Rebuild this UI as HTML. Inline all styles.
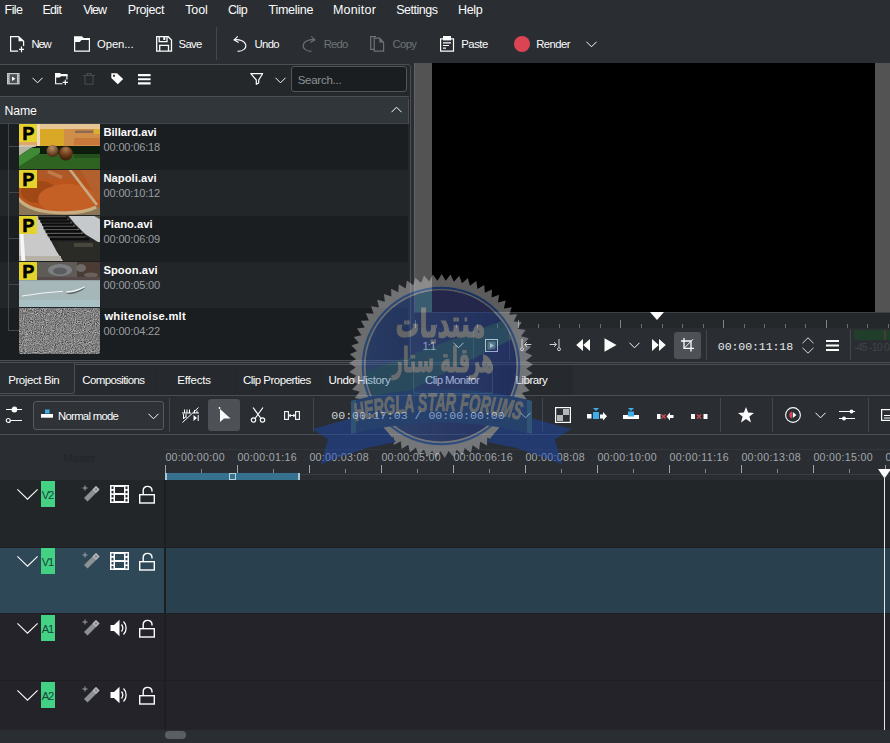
<!DOCTYPE html>
<html><head><meta charset="utf-8"><title>Kdenlive</title>
<style>
*{box-sizing:border-box;margin:0;padding:0}
html,body{width:890px;height:743px;overflow:hidden;background:#2a2e32}
body{position:relative;font-family:"Liberation Sans","DejaVu Sans",sans-serif;font-size:12px;color:#fcfcfc}
.a{position:absolute}
.t{position:absolute;white-space:nowrap;line-height:16px}
.mono{font-family:"Liberation Mono","DejaVu Sans Mono",monospace}
svg{position:absolute;overflow:visible}
.ln{position:absolute}
</style></head><body>
<div id="menubar"><span class="t" style="left:4.60px;top:1.67px;font-size:12.5px;letter-spacing:-0.597px;">File</span><span class="t" style="left:42.50px;top:1.67px;font-size:12.5px;letter-spacing:-0.722px;">Edit</span><span class="t" style="left:83.20px;top:1.67px;font-size:12.5px;letter-spacing:-0.980px;">View</span><span class="t" style="left:127.70px;top:1.67px;font-size:12.5px;letter-spacing:-0.372px;">Project</span><span class="t" style="left:185.20px;top:1.67px;font-size:12.5px;letter-spacing:-0.118px;">Tool</span><span class="t" style="left:227.90px;top:1.67px;font-size:12.5px;letter-spacing:-0.594px;">Clip</span><span class="t" style="left:268.60px;top:1.67px;font-size:12.5px;letter-spacing:-0.288px;">Timeline</span><span class="t" style="left:332.90px;top:1.67px;font-size:12.5px;letter-spacing:0.214px;">Monitor</span><span class="t" style="left:396.20px;top:1.67px;font-size:12.5px;letter-spacing:-0.488px;">Settings</span><span class="t" style="left:458.00px;top:1.67px;font-size:12.5px;letter-spacing:-0.352px;">Help</span></div><div id="toolbar"><svg style="left:10px;top:36px" width="16" height="16" viewBox="0 0 16 16" fill="none" stroke="#fcfcfc" stroke-width="1.2" ><path d="M8.2,15.2H0.6V0.6H8.6L13.6,5.2V10"/><path d="M8.5,0.3L14,5.3H8.5Z" fill="#fcfcfc" stroke="none"/><path d="M11.5,10.6V16.2M9,13.4H14"/></svg><span class="t" style="left:31.60px;top:36.08px;font-size:11.3px;letter-spacing:-1.321px;">New</span><svg style="left:74px;top:36px" width="16" height="16" viewBox="0 0 16 16" fill="none" stroke="#fcfcfc" stroke-width="1.2" ><path d="M0.6,2.5H15.4V15.2H0.6Z"/><path d="M0,0.3H8L10,2.4H16V4H7.6L5.6,6H0Z" fill="#fcfcfc" stroke="none"/></svg><span class="t" style="left:97.00px;top:36.08px;font-size:11.3px;letter-spacing:-0.085px;">Open...</span><svg style="left:156px;top:36px" width="16" height="16" viewBox="0 0 16 16" fill="none" stroke="#fcfcfc" stroke-width="1.3" ><path d="M0.7,0.7H12.2L15.5,4V15.1H0.7Z"/><path d="M3.2,0.7V5.6H11V0.7"/><path d="M8.3,1V4" stroke-width="2"/><path d="M3.7,15.1V9.3H12.5V15.1"/></svg><span class="t" style="left:178.60px;top:36.08px;font-size:11.3px;letter-spacing:-0.689px;">Save</span><div class="ln" style="left:216px;top:27px;width:1px;height:33px;background:#43484d"></div><svg style="left:233px;top:36px" width="14" height="16" viewBox="0 0 14 16" fill="none" stroke="#fcfcfc" stroke-width="1.1" ><path d="M4.8,0.3L1.1,3.8L5.6,6.4"/><path d="M1.1,3.8C6,3.2 11.5,4.5 12.7,8.6C13.6,12.4 10,15.3 4.6,15.4"/></svg><span class="t" style="left:254.60px;top:36.08px;font-size:11.3px;letter-spacing:-0.675px;">Undo</span><svg style="left:302px;top:36px" width="14" height="16" viewBox="0 0 14 16" fill="none" stroke="#6e7276" stroke-width="1.1" ><path d="M9.2,0.3L12.9,3.8L8.4,6.4"/><path d="M12.9,3.8C8,3.2 2.5,4.5 1.3,8.6C0.4,12.4 4,15.3 9.4,15.4"/></svg><span class="t" style="left:323.80px;top:36.08px;font-size:11.3px;letter-spacing:-0.841px;color:#6e7276">Redo</span><svg style="left:370px;top:36px" width="15" height="16" viewBox="0 0 15 16" fill="none" stroke="#6e7276" stroke-width="1.2" ><path d="M4,13.4H0.7V0.7H6"/><path d="M4.2,2.2H9.6L13.6,6.4V15.2H4.2Z"/><path d="M9.4,1.8L14,6.6H9.4Z" fill="#6e7276" stroke="none"/></svg><span class="t" style="left:392.60px;top:36.08px;font-size:11.3px;letter-spacing:-0.675px;color:#6e7276">Copy</span><svg style="left:440px;top:36px" width="14" height="16" viewBox="0 0 14 16" fill="none" stroke="#fcfcfc" stroke-width="1.2" ><path d="M0.6,2.8H13.5V15.2H0.6Z"/><path d="M3,0H11V4.4H3Z" fill="#fcfcfc" stroke="none"/><path d="M3,6.8H11M3,9.5H9M3,12.2H6"/></svg><span class="t" style="left:461.30px;top:36.08px;font-size:11.3px;letter-spacing:-0.476px;">Paste</span><div class="a" style="left:514px;top:36px;width:16px;height:16px;border-radius:50%;background:#da4453"></div><span class="t" style="left:536.20px;top:36.08px;font-size:11.3px;letter-spacing:-0.538px;">Render</span><svg style="left:586px;top:41px" width="11" height="7" viewBox="0 0 11 7" fill="none" stroke="#fcfcfc" stroke-width="1" ><path d="M0.5,0.8L5.5,5.8L10.5,0.8"/></svg></div><div id="bin"><div class="a" style="left:-2px;top:64px;width:413px;height:297px;border:1px solid #4a4f54;border-radius:0 3px 3px 0;background:#25282b"></div><div class="ln" style="left:0px;top:96px;width:409px;height:1px;background:#4a4f54"></div><svg style="left:7px;top:73.3px" width="12.6" height="11.4" viewBox="0 0 12.6 11.4" fill="none" stroke="#fcfcfc" stroke-width="1" ><rect x="0" y="0" width="12.6" height="11.4" fill="#c9cbcc" stroke="none"/><rect x="2.6" y="1.2" width="7.4" height="9" fill="#4b4f53" stroke="none"/><path d="M5,3.4L8.4,5.7L5,8Z" fill="#fcfcfc" stroke="none"/><path d="M1.3,1V10.4M11.3,1V10.4" stroke="#8f9396" stroke-width="1" stroke-dasharray="1.4 1.2"/></svg><svg style="left:32px;top:76.5px" width="11" height="7" viewBox="0 0 11 7" fill="none" stroke="#fcfcfc" stroke-width="1" ><path d="M0.5,0.8L5.5,5.8L10.5,0.8"/></svg><svg style="left:55px;top:73.3px" width="13" height="12" viewBox="0 0 13 12" fill="none" stroke="#fcfcfc" stroke-width="1.1" ><path d="M7.5,10.8H0.6V1.5H11.9V6.5"/><path d="M0,0H5L6.5,1.5H12.5V3.2H6L4.6,4.6H0Z" fill="#fcfcfc" stroke="none"/><path d="M10.3,6.8V12M7.7,9.4H12.9"/></svg><svg style="left:83px;top:73px" width="12" height="12" viewBox="0 0 12 12" fill="none" stroke="#4b4f54" stroke-width="1" ><path d="M0,2.5H12M4,2.5V0.5H8V2.5M2,2.5V11.2H10V2.5"/></svg><svg style="left:110.6px;top:73.3px" width="12.4" height="11.4" viewBox="0 0 12.4 11.4" fill="none" stroke="#fcfcfc" stroke-width="1" ><path d="M0.3,0.3H6L12.2,6L6.8,11.2L0.3,5Z" fill="#fcfcfc" stroke="none"/><circle cx="3" cy="2.8" r="1.1" fill="#25282b" stroke="none"/></svg><svg style="left:138.4px;top:73.9px" width="12.6" height="11" viewBox="0 0 12.6 11" fill="none" stroke="#fcfcfc" stroke-width="1" ><path d="M0,1.1H12.6M0,5.3H12.6M0,9.4H12.6" stroke-width="2.1"/></svg><svg style="left:249.5px;top:73px" width="14" height="12" viewBox="0 0 14 12" fill="none" stroke="#fcfcfc" stroke-width="1.2" ><path d="M0.8,0.7H12.6L8.7,7V10L6.3,11.3V7Z" stroke-linejoin="round"/></svg><svg style="left:274.5px;top:76.6px" width="11" height="7" viewBox="0 0 11 7" fill="none" stroke="#fcfcfc" stroke-width="1" ><path d="M0.5,0.8L5.5,5.8L10.5,0.8"/></svg><div class="a" style="left:291px;top:66px;width:116px;height:26px;border:1px solid #50555a;border-radius:3px;background:#1b1e20"></div><span class="t" style="left:297.70px;top:71.82px;font-size:11.5px;letter-spacing:-0.266px;color:#8d9195">Search...</span><div class="a" style="left:0px;top:97px;width:409px;height:27px;background:#31363b;border-right:1px solid #4a4f54;border-bottom:1px solid #43484d;border-top-right-radius:3px"></div><span class="t" style="left:4.60px;top:102.74px;font-size:12.3px;letter-spacing:-0.188px;">Name</span><svg style="left:391px;top:106px" width="11" height="7" viewBox="0 0 11 7" fill="none" stroke="#fcfcfc" stroke-width="1" ><path d="M0.5,6.2L5.5,1.2L10.5,6.2"/></svg><div class="a" style="left:0px;top:124px;width:408px;height:236px;background:#1b1e20"></div><div class="a" style="left:0px;top:170px;width:408px;height:46px;background:#232629"></div><div class="a" style="left:0px;top:262px;width:408px;height:46px;background:#232629"></div><div class="ln" style="left:8px;top:124px;width:1px;height:207px;background:#43474b"></div><div class="ln" style="left:9px;top:146px;width:10px;height:1px;background:#43474b"></div><div class="ln" style="left:9px;top:192px;width:10px;height:1px;background:#43474b"></div><div class="ln" style="left:9px;top:238px;width:10px;height:1px;background:#43474b"></div><div class="ln" style="left:9px;top:284px;width:10px;height:1px;background:#43474b"></div><div class="ln" style="left:9px;top:330px;width:10px;height:1px;background:#43474b"></div><svg width="0" height="0" style="left:0;top:0"><defs><filter id="tb" x="-5%" y="-5%" width="110%" height="110%"><feGaussianBlur stdDeviation="0.55"/></filter><radialGradient id="b1" cx="0.45" cy="0.25" r="0.8"><stop offset="0" stop-color="#b89068"/><stop offset="0.55" stop-color="#7a5030"/><stop offset="1" stop-color="#3a2010"/></radialGradient><radialGradient id="b2" cx="0.5" cy="0.2" r="0.85"><stop offset="0" stop-color="#a87850"/><stop offset="0.5" stop-color="#6e3c1a"/><stop offset="1" stop-color="#2e1608"/></radialGradient></defs></svg><svg style="left:19px;top:124px;overflow:hidden" width="81" height="45" viewBox="0 0 81 45"><g filter="url(#tb)"><rect x="-3" y="-3" width="87" height="51" fill="#d29a38"/><rect x="21" y="4" width="25" height="18" fill="#d8a828"/><rect x="45" y="5" width="39" height="17" fill="#cf8f4a"/><rect x="55" y="14" width="29" height="7" fill="#c8783a"/><rect x="-3" y="-3" width="87" height="8" fill="#e6c594"/><rect x="18" y="-3" width="3" height="25" fill="#efd9c0"/><rect x="56" y="6.5" width="18" height="2.5" fill="#8f6a50"/><rect x="75" y="5" width="6" height="5" fill="#d8b030"/><rect x="-3" y="18" width="21" height="4" fill="#dfa868"/><rect x="-3" y="22" width="87" height="9" fill="#0f1b09"/><rect x="-3" y="30" width="87" height="18" fill="#2d6420"/><rect x="55" y="30" width="29" height="4" fill="#24501a"/><path d="M-3,22H17L12,24L-3,34Z" fill="#b4b4a4"/><path d="M-3,34L12,24H21V29L-3,44Z" fill="#3f8a34"/><path d="M-3,21.2H17V22.6H-3Z" fill="#d8d0c0"/><circle cx="33.5" cy="27" r="6" fill="url(#b1)"/><circle cx="46.8" cy="29.5" r="7" fill="url(#b2)"/></g></svg><div class="a" style="left:19px;top:124px;width:18px;height:18px;background:#e3d32c"></div><span class="t" style="left:22.40px;top:125.90px;font-size:17.6px;letter-spacing:0.000px;font-weight:bold;color:#000;-webkit-text-stroke:0.7px #000">P</span><span class="t" style="left:103.40px;top:123.62px;font-size:11.2px;letter-spacing:-0.017px;font-weight:bold;">Billard.avi</span><span class="t" style="left:103.60px;top:138.59px;font-size:11px;letter-spacing:-0.159px;color:#9a9ea2">00:00:06:18</span><svg style="left:19px;top:170px;overflow:hidden" width="81" height="45" viewBox="0 0 81 45"><g filter="url(#tb)"><rect x="-3" y="-3" width="87" height="51" fill="#b9551f"/><rect x="-3" y="-3" width="87" height="12" fill="#ad5828"/><ellipse cx="20" cy="22" rx="18" ry="11" fill="#a04812"/><ellipse cx="48" cy="29" rx="29" ry="15" fill="#c45f27"/><path d="M60,-3H84V30L78,30Z" fill="#b2602f"/><path d="M30,0L44,6L42,9L28,3Z" fill="#c07a48"/><path d="M-3,46V26C4,36 14,40 30,42C50,44 66,43 78,36L84,40V48Z" fill="#8a7656"/><path d="M-2,27C4,36 14,40 30,42C50,44 66,43 77,37" stroke="#c9ad80" stroke-width="3.2" fill="none"/><path d="M50.5,-1L78,35" stroke="#c8aa82" stroke-width="2.8" fill="none"/></g></svg><div class="a" style="left:19px;top:170px;width:18px;height:18px;background:#e3d32c"></div><span class="t" style="left:22.40px;top:171.90px;font-size:17.6px;letter-spacing:0.000px;font-weight:bold;color:#000;-webkit-text-stroke:0.7px #000">P</span><span class="t" style="left:103.40px;top:169.62px;font-size:11.2px;letter-spacing:0.051px;font-weight:bold;">Napoli.avi</span><span class="t" style="left:103.60px;top:184.59px;font-size:11px;letter-spacing:-0.159px;color:#9a9ea2">00:00:10:12</span><svg style="left:19px;top:216px;overflow:hidden" width="81" height="45" viewBox="0 0 81 45"><g filter="url(#tb)"><rect x="-3" y="-3" width="87" height="51" fill="#c9c9c9"/><path d="M17,-3H84V48H46L38,36Z" fill="#262626"/><path d="M47,-3H72L84,5V29L66,18L56,8Z" fill="#c6c9cc"/><path d="M70,-3H84V5Z" fill="#5a5648"/><g stroke="#6e6e6e" stroke-width="1.2"><path d="M19,1H47M21,4H50M22,7H53M24,10.2H56M25,13.7H60M27,17.2H64M29,21H66"/></g><g stroke="#0b0b0b" stroke-width="2.3"><path d="M19.5,2.5H48M21.5,5.5H51M23,8.6H54M24.5,12H58M26.5,15.5H62M28.5,19.2H66M31,23H70"/></g><path d="M36,26H84V48H46Z" fill="#2a2a28"/><path d="M55,27H74V31H55Z" fill="#4a463a"/><path d="M-3,40H42V48H-3Z" fill="#b6b2a8"/><path d="M1,18H4.5L6.5,48H2.5Z" fill="#f6f6f6"/></g></svg><div class="a" style="left:19px;top:216px;width:18px;height:18px;background:#e3d32c"></div><span class="t" style="left:22.40px;top:217.90px;font-size:17.6px;letter-spacing:0.000px;font-weight:bold;color:#000;-webkit-text-stroke:0.7px #000">P</span><span class="t" style="left:103.40px;top:215.62px;font-size:11.2px;letter-spacing:-0.001px;font-weight:bold;">Piano.avi</span><span class="t" style="left:103.60px;top:230.59px;font-size:11px;letter-spacing:-0.159px;color:#9a9ea2">00:00:06:09</span><svg style="left:19px;top:262px;overflow:hidden" width="81" height="45" viewBox="0 0 81 45"><g filter="url(#tb)"><rect x="-3" y="-3" width="87" height="51" fill="#a5b7b9"/><rect x="-3" y="-3" width="87" height="21" fill="#5f5b59"/><ellipse cx="41" cy="8" rx="12" ry="6" fill="#7c7e82"/><ellipse cx="41" cy="9" rx="7" ry="3.5" fill="#5a5c60"/><path d="M58,-3H84V18H58Z" fill="#4b3a34"/><ellipse cx="62" cy="6" rx="5" ry="4" fill="#6e6866"/><ellipse cx="72" cy="13" rx="7" ry="2.5" fill="#6a605c"/><rect x="-3" y="15" width="87" height="3.2" fill="#574a48"/><rect x="-3" y="38" width="87" height="10" fill="#a9c0c4"/><path d="M3,34L24,31L44,29.2" stroke="#eef2f2" stroke-width="1.1" fill="none"/><path d="M47,30.6C52,32.5 60,30.5 66,25.2" stroke="#5e6a6c" stroke-width="1.6" fill="none"/><path d="M47,30C53,30 60,28 66,24.8" stroke="#f4f6f6" stroke-width="1.3" fill="none"/></g></svg><div class="a" style="left:19px;top:262px;width:18px;height:18px;background:#e3d32c"></div><span class="t" style="left:22.40px;top:263.90px;font-size:17.6px;letter-spacing:0.000px;font-weight:bold;color:#000;-webkit-text-stroke:0.7px #000">P</span><span class="t" style="left:103.40px;top:261.62px;font-size:11.2px;letter-spacing:0.094px;font-weight:bold;">Spoon.avi</span><span class="t" style="left:103.60px;top:276.59px;font-size:11px;letter-spacing:-0.159px;color:#9a9ea2">00:00:05:00</span><svg style="left:19px;top:308px;overflow:hidden;border-radius:0 0 3px 3px" width="81" height="46" viewBox="0 0 81 46"><filter id="nz" x="0" y="0" width="100%" height="100%" color-interpolation-filters="sRGB"><feTurbulence type="fractalNoise" baseFrequency="0.9" numOctaves="2" seed="3"/><feColorMatrix type="matrix" values="0.42 0.42 0.42 0 -0.13  0.42 0.42 0.42 0 -0.13  0.42 0.42 0.42 0 -0.13  0 0 0 0 1"/></filter><rect width="81" height="46" fill="#8c8c8c"/><rect width="81" height="46" filter="url(#nz)"/></svg><span class="t" style="left:104.40px;top:307.62px;font-size:11.2px;letter-spacing:0.279px;font-weight:bold;">whitenoise.mlt</span><span class="t" style="left:103.60px;top:322.59px;font-size:11px;letter-spacing:-0.159px;color:#9a9ea2">00:00:04:22</span></div><div id="monitor"><div class="a" style="left:414px;top:63px;width:476px;height:249px;background:#535353;border-left:1px solid #5e6266"></div><div class="a" style="left:432px;top:63px;width:443px;height:249px;background:#000"></div><div class="a" style="left:415px;top:313px;width:475px;height:15px;background:#25282b"></div><div class="ln" style="left:414px;top:312px;width:476px;height:1px;background:#3d4247"></div><div class="ln" style="left:415px;top:320px;width:1px;height:8px;background:#7e8387"></div><div class="ln" style="left:436px;top:324px;width:1px;height:4px;background:#6a6f73"></div><div class="ln" style="left:456px;top:324px;width:1px;height:4px;background:#6a6f73"></div><div class="ln" style="left:477px;top:324px;width:1px;height:4px;background:#6a6f73"></div><div class="ln" style="left:497px;top:324px;width:1px;height:4px;background:#6a6f73"></div><div class="ln" style="left:518px;top:320px;width:1px;height:8px;background:#7e8387"></div><div class="ln" style="left:538px;top:324px;width:1px;height:4px;background:#6a6f73"></div><div class="ln" style="left:559px;top:324px;width:1px;height:4px;background:#6a6f73"></div><div class="ln" style="left:579px;top:324px;width:1px;height:4px;background:#6a6f73"></div><div class="ln" style="left:600px;top:324px;width:1px;height:4px;background:#6a6f73"></div><div class="ln" style="left:620px;top:320px;width:1px;height:8px;background:#7e8387"></div><div class="ln" style="left:641px;top:324px;width:1px;height:4px;background:#6a6f73"></div><div class="ln" style="left:662px;top:324px;width:1px;height:4px;background:#6a6f73"></div><div class="ln" style="left:682px;top:324px;width:1px;height:4px;background:#6a6f73"></div><div class="ln" style="left:703px;top:324px;width:1px;height:4px;background:#6a6f73"></div><div class="ln" style="left:723px;top:320px;width:1px;height:8px;background:#7e8387"></div><div class="ln" style="left:744px;top:324px;width:1px;height:4px;background:#6a6f73"></div><div class="ln" style="left:764px;top:324px;width:1px;height:4px;background:#6a6f73"></div><div class="ln" style="left:785px;top:324px;width:1px;height:4px;background:#6a6f73"></div><div class="ln" style="left:805px;top:324px;width:1px;height:4px;background:#6a6f73"></div><div class="ln" style="left:826px;top:320px;width:1px;height:8px;background:#7e8387"></div><div class="ln" style="left:847px;top:324px;width:1px;height:4px;background:#6a6f73"></div><div class="ln" style="left:867px;top:324px;width:1px;height:4px;background:#6a6f73"></div><div class="ln" style="left:888px;top:324px;width:1px;height:4px;background:#6a6f73"></div><svg style="left:650px;top:312px" width="14" height="8" viewBox="0 0 14 8"><path d="M0,0H14L7,8Z" fill="#fcfcfc"/></svg><span class="t" style="left:422.50px;top:338.08px;font-size:11.3px;letter-spacing:-0.961px;color:#d5d8da">1:1</span><svg style="left:453px;top:342px" width="11" height="7" viewBox="0 0 11 7" fill="none" stroke="#fcfcfc" stroke-width="1" ><path d="M0.5,0.8L5.5,5.8L10.5,0.8"/></svg><div class="ln" style="left:473px;top:331px;width:1px;height:29px;background:#43484d"></div><svg style="left:485px;top:339px" width="13" height="13" viewBox="0 0 13 13" fill="none" stroke="#fcfcfc" stroke-width="1" ><rect x="0.5" y="0.5" width="12" height="12" /><rect x="2.5" y="2.5" width="8" height="8" fill="#fcfcfc" fill-opacity="0.35" stroke="none"/><path d="M5,4L9,6.5L5,9Z" fill="#fcfcfc" stroke="none"/></svg><div class="ln" style="left:509px;top:331px;width:1px;height:29px;background:#43484d"></div><svg style="left:520px;top:339px" width="12" height="13" viewBox="0 0 12 13" fill="none" stroke="#d0d3d5" stroke-width="1" ><path d="M2,0V8.4"/><circle cx="2" cy="10.2" r="1.5"/><path d="M11.3,5.5H4.6M7,3.2L4.6,5.5L7,7.8"/></svg><svg style="left:548.7px;top:339px" width="12" height="13" viewBox="0 0 12 13" fill="none" stroke="#d0d3d5" stroke-width="1" ><path d="M10,0V8.4"/><circle cx="10" cy="10.2" r="1.5"/><path d="M0.7,5.5H7.4M5,3.2L7.4,5.5L5,7.8"/></svg><svg style="left:576px;top:339px" width="14" height="12" viewBox="0 0 14 12" fill="none" stroke="#fcfcfc" stroke-width="1" ><path d="M7,0V12L0.2,6ZM14,0V12L7.2,6Z" fill="#fcfcfc" stroke="none"/></svg><svg style="left:604px;top:338px" width="13" height="14" viewBox="0 0 13 14" fill="none" stroke="#fcfcfc" stroke-width="1" ><path d="M0.5,0.3V13.7L12.5,7Z" fill="#fcfcfc" stroke="none"/></svg><svg style="left:629px;top:342px" width="11" height="7" viewBox="0 0 11 7" fill="none" stroke="#fcfcfc" stroke-width="1" ><path d="M0.5,0.8L5.5,5.8L10.5,0.8"/></svg><svg style="left:651.6px;top:339px" width="14" height="12" viewBox="0 0 14 12" fill="none" stroke="#fcfcfc" stroke-width="1" ><path d="M0,0V12L6.8,6ZM7,0V12L13.8,6Z" fill="#fcfcfc" stroke="none"/></svg><div class="a" style="left:674px;top:332px;width:27px;height:27px;background:#4e5256;border-radius:3px"></div><svg style="left:680.7px;top:338px" width="13" height="13.5" viewBox="0 0 13 13.5" fill="none" stroke="#fcfcfc" stroke-width="1.3" ><path d="M3,0V10.4H13M0,3H10V13.5"/><path d="M3.4,10L12,1.2" stroke-width="1"/></svg><div class="ln" style="left:706px;top:330px;width:1px;height:30px;background:#43484d"></div><span class="t mono" style="left:717.80px;top:338.61px;font-size:11.6px;letter-spacing:-0.117px;color:#e6e8ea">00:00:11:18</span><svg style="left:802px;top:337px" width="12" height="17" viewBox="0 0 12 17" fill="none" stroke="#d8dadc" stroke-width="1" ><path d="M0.5,6.2L6,0.8L11.5,6.2M0.5,10.8L6,16.2L11.5,10.8"/></svg><svg style="left:826px;top:340px" width="13" height="11" viewBox="0 0 13 11" fill="none" stroke="#fcfcfc" stroke-width="1" ><path d="M0,1H13M0,5.5H13M0,10H13" stroke-width="2"/></svg><div class="ln" style="left:850px;top:330px;width:1px;height:30px;background:#43484d"></div><div class="a" style="left:854px;top:330px;width:36px;height:10px;background:#1f3f2a"></div><div class="ln" style="left:857px;top:330px;width:1px;height:10px;background:#2a3a30"></div><div class="ln" style="left:884px;top:330px;width:2px;height:10px;background:#4a3a36"></div><span class="t" style="left:854.00px;top:339.36px;font-size:10.5px;letter-spacing:-0.773px;color:#3f4549">-45 -10 0</span><div class="ln" style="left:0px;top:362px;width:890px;height:1px;background:#4a4f54"></div><div class="ln" style="left:413px;top:364px;width:477px;height:1px;background:#4a4f54"></div></div><div id="tabs"><div class="a" style="left:75px;top:364px;width:338px;height:31px;background:#26292d"></div><div class="ln" style="left:75px;top:364px;width:338px;height:1px;background:#4a4f54"></div><div class="a" style="left:493px;top:365px;width:80px;height:30px;background:#26292d"></div><div class="a" style="left:-2px;top:362px;width:77px;height:32px;border:1px solid #4a4f54;border-left:0;border-bottom-right-radius:3px;background:#2a2e32"></div><div class="ln" style="left:155px;top:365px;width:1px;height:29px;background:#23272a"></div><div class="ln" style="left:235px;top:365px;width:1px;height:29px;background:#23272a"></div><div class="ln" style="left:321px;top:365px;width:1px;height:29px;background:#23272a"></div><div class="a" style="left:413px;top:365px;width:80px;height:29px;border:1px solid #4a4f54;border-top:0;border-radius:0 0 3px 3px;background:#2a2e32"></div><span class="t" style="left:8.20px;top:371.92px;font-size:11.5px;letter-spacing:-0.411px;">Project Bin</span><span class="t" style="left:82.30px;top:371.92px;font-size:11.5px;letter-spacing:-0.629px;">Compositions</span><span class="t" style="left:177.20px;top:371.92px;font-size:11.5px;letter-spacing:-0.182px;">Effects</span><span class="t" style="left:242.90px;top:371.92px;font-size:11.5px;letter-spacing:-0.505px;">Clip Properties</span><span class="t" style="left:328.50px;top:371.92px;font-size:11.5px;letter-spacing:-0.383px;">Undo History</span><span class="t" style="left:425.00px;top:371.92px;font-size:11.5px;letter-spacing:-0.593px;">Clip Monitor</span><span class="t" style="left:515.50px;top:371.92px;font-size:11.5px;letter-spacing:-0.484px;">Library</span><div class="ln" style="left:0px;top:395px;width:890px;height:1px;background:#4a4f54"></div></div><div id="tltoolbar"><svg style="left:6px;top:406px" width="17" height="18" viewBox="0 0 17 18" fill="none" stroke="#fcfcfc" stroke-width="1.2" ><path d="M0,3.5H16M0,14.5H16" /><circle cx="8.4" cy="3.5" r="2.3" fill="#fcfcfc"/><circle cx="2.3" cy="14.5" r="2" fill="#2a2e32"/></svg><div class="a" style="left:33px;top:401px;width:131px;height:29px;border:1px solid #565b60;border-radius:3px;background:#2f3338"></div><svg style="left:41px;top:408px" width="12" height="11" viewBox="0 0 12 11"><rect x="4" y="1.5" width="4.5" height="4" fill="#3daee9"/><rect x="0" y="6" width="12" height="3.7" fill="#fcfcfc"/></svg><span class="t" style="left:58.00px;top:408.28px;font-size:11.3px;letter-spacing:-0.692px;">Normal mode</span><svg style="left:148px;top:412.5px" width="11" height="7" viewBox="0 0 11 7" fill="none" stroke="#fcfcfc" stroke-width="1" ><path d="M0.5,0.8L5.5,5.8L10.5,0.8"/></svg><div class="ln" style="left:169px;top:398px;width:1px;height:34px;background:#43484d"></div><svg style="left:181.5px;top:407px" width="18" height="16" viewBox="0 0 18 16" fill="none" stroke="#fcfcfc" stroke-width="1" ><path d="M0.5,15.5L16.5,0.5"/><path d="M0,6H9M2.5,2.5V6M5,2.5V6M7.5,2.5V6M12.5,3V6M15,3.5V6M11,6H17"/><path d="M1.5,7V12L3.5,9.5M4,7V11"/><path d="M11.5,8L15,11L11.5,14Z" fill="#fcfcfc" stroke="none"/><path d="M16.2,8V14"/></svg><div class="a" style="left:208px;top:399px;width:32px;height:32px;background:#4d5155;border-radius:3px"></div><svg style="left:218px;top:406px" width="14" height="17" viewBox="0 0 14 17" fill="none" stroke="#fcfcfc" stroke-width="1" ><path d="M2,3V16L6,12.5H12.5Z" fill="#fcfcfc" stroke="none"/><circle cx="1.5" cy="2" r="0.9" fill="#fcfcfc" stroke="none"/></svg><svg style="left:250px;top:407px" width="16" height="16" viewBox="0 0 16 16" fill="none" stroke="#fcfcfc" stroke-width="1.2" ><path d="M3,0.5L11,11.5M13,0.5L5,11.5"/><circle cx="3.5" cy="13" r="2.2"/><circle cx="12.5" cy="13" r="2.2"/></svg><svg style="left:284px;top:411px" width="16" height="9" viewBox="0 0 16 9" fill="none" stroke="#fcfcfc" stroke-width="1.1" ><rect x="0.6" y="0.6" width="3.8" height="7.8"/><rect x="11.6" y="0.6" width="3.8" height="7.8"/><path d="M5.5,4.5H10.5M6.5,3L5.5,4.5L6.5,6M9.5,3L10.5,4.5L9.5,6"/></svg><div class="ln" style="left:313px;top:398px;width:1px;height:34px;background:#43484d"></div><span class="t mono" style="left:331.30px;top:408.11px;font-size:11.6px;letter-spacing:-0.020px;color:#d0d3d6">00:00:17:03 / 00:00:00:00</span><svg style="left:520px;top:412px" width="11" height="7" viewBox="0 0 11 7" fill="none" stroke="#d0d3d6" stroke-width="1" ><path d="M0.5,0.8L5.5,5.8L10.5,0.8"/></svg><div class="ln" style="left:542px;top:398px;width:1px;height:34px;background:#43484d"></div><svg style="left:555px;top:407px" width="16" height="16" viewBox="0 0 16 16" fill="none" stroke="#fcfcfc" stroke-width="1" ><rect x="0.6" y="0.6" width="14.8" height="14.8" stroke-width="1.2"/><rect x="8" y="2" width="6" height="6" fill="#b4b6b8" stroke="none"/><rect x="2" y="8" width="6" height="6" fill="#b4b6b8" stroke="none"/></svg><svg style="left:587px;top:408px" width="20" height="13" viewBox="0 0 20 13"><path d="M6,0H12L9,3Z" fill="#3daee9"/><rect x="6" y="4" width="6" height="7" fill="#3daee9"/><rect x="0" y="6" width="4.5" height="4.5" fill="#fcfcfc"/><path d="M13,6.5H16V4L20,8.3L16,12.6V10.5H13Z" fill="#fcfcfc"/></svg><svg style="left:623px;top:408px" width="16" height="12" viewBox="0 0 16 12"><path d="M5,0H11L8,3Z" fill="#3daee9"/><rect x="5" y="3.5" width="6" height="5" fill="#3daee9"/><rect x="0" y="7" width="16" height="4" fill="#fcfcfc"/><rect x="5" y="7" width="6" height="1.5" fill="#3daee9"/></svg><svg style="left:657px;top:412px" width="17" height="9" viewBox="0 0 17 9"><rect x="0" y="2" width="3.5" height="5" fill="#fcfcfc"/><path d="M4.5,2.5L8.5,6.5M8.5,2.5L4.5,6.5" stroke="#da4453" stroke-width="1.3"/><path d="M9.5,4.5L13,0.5V3H16.5V6H13V8.5Z" fill="#fcfcfc"/></svg><svg style="left:691px;top:412px" width="17" height="9" viewBox="0 0 17 9"><rect x="0" y="2" width="4" height="5" fill="#fcfcfc"/><path d="M6,2.5L10,6.5M10,2.5L6,6.5" stroke="#da4453" stroke-width="1.3"/><rect x="12.5" y="2" width="4" height="5" fill="#fcfcfc"/></svg><div class="ln" style="left:720px;top:398px;width:1px;height:34px;background:#43484d"></div><svg style="left:738px;top:407px" width="16" height="16" viewBox="0 0 16 16"><path d="M8,0L10.1,5.6L16,5.9L11.4,9.6L13,15.4L8,12.1L3,15.4L4.6,9.6L0,5.9L5.9,5.6Z" fill="#fcfcfc"/></svg><div class="ln" style="left:772px;top:398px;width:1px;height:34px;background:#43484d"></div><svg style="left:785px;top:407px" width="16" height="16" viewBox="0 0 16 16" fill="none" stroke="#fcfcfc" stroke-width="1.1" ><circle cx="8" cy="8" r="7.4"/><path d="M7,4.5A3.6,3.6 0 0 0 7,11.5Z" fill="#da4453" stroke="none"/><path d="M7.8,5L11.5,8L7.8,11Z" fill="#fcfcfc" stroke="none"/></svg><svg style="left:815px;top:412px" width="11" height="7" viewBox="0 0 11 7" fill="none" stroke="#fcfcfc" stroke-width="1" ><path d="M0.5,0.8L5.5,5.8L10.5,0.8"/></svg><svg style="left:839px;top:409px" width="16" height="12" viewBox="0 0 16 12" fill="none" stroke="#fcfcfc" stroke-width="1.1" ><path d="M0,2.5H16M0,9.5H16"/><circle cx="12.5" cy="2.5" r="1.4" fill="#fcfcfc"/><circle cx="5" cy="9.5" r="1.4" fill="#fcfcfc"/></svg><div class="ln" style="left:868px;top:398px;width:1px;height:34px;background:#43484d"></div><svg style="left:881px;top:409px" width="12" height="12" viewBox="0 0 12 12" fill="none" stroke="#fcfcfc" stroke-width="1" ><rect x="0.6" y="0.6" width="14" height="10.8" stroke-width="1.2"/><path d="M3,6.5H12M3,9H12"/></svg><div class="ln" style="left:0px;top:434px;width:890px;height:1px;background:#4a4f54"></div></div><div id="timeline"><div class="a" style="left:0px;top:435px;width:890px;height:45px;background:#2a2e32"></div><span class="t" style="left:63.80px;top:449.89px;font-size:11px;letter-spacing:-0.351px;color:#212428">Master</span><div class="ln" style="left:165px;top:449px;width:725px;height:1px;background:#33373b"></div><span class="t" style="left:165.40px;top:449.23px;font-size:10.6px;letter-spacing:0.333px;color:#a3a7ab">00:00:00:00</span><div class="ln" style="left:165px;top:465px;width:1px;height:8px;background:#a0a4a8"></div><div class="ln" style="left:201px;top:469px;width:1px;height:4px;background:#80858a"></div><span class="t" style="left:237.40px;top:449.23px;font-size:10.6px;letter-spacing:0.333px;color:#a3a7ab">00:00:01:16</span><div class="ln" style="left:237px;top:465px;width:1px;height:8px;background:#a0a4a8"></div><div class="ln" style="left:273px;top:469px;width:1px;height:4px;background:#80858a"></div><span class="t" style="left:309.40px;top:449.23px;font-size:10.6px;letter-spacing:0.333px;color:#a3a7ab">00:00:03:08</span><div class="ln" style="left:309px;top:465px;width:1px;height:8px;background:#a0a4a8"></div><div class="ln" style="left:345px;top:469px;width:1px;height:4px;background:#80858a"></div><span class="t" style="left:381.40px;top:449.23px;font-size:10.6px;letter-spacing:0.333px;color:#a3a7ab">00:00:05:00</span><div class="ln" style="left:381px;top:465px;width:1px;height:8px;background:#a0a4a8"></div><div class="ln" style="left:417px;top:469px;width:1px;height:4px;background:#80858a"></div><span class="t" style="left:453.40px;top:449.23px;font-size:10.6px;letter-spacing:0.333px;color:#a3a7ab">00:00:06:16</span><div class="ln" style="left:453px;top:465px;width:1px;height:8px;background:#a0a4a8"></div><div class="ln" style="left:489px;top:469px;width:1px;height:4px;background:#80858a"></div><span class="t" style="left:525.40px;top:449.23px;font-size:10.6px;letter-spacing:0.333px;color:#a3a7ab">00:00:08:08</span><div class="ln" style="left:525px;top:465px;width:1px;height:8px;background:#a0a4a8"></div><div class="ln" style="left:561px;top:469px;width:1px;height:4px;background:#80858a"></div><span class="t" style="left:597.40px;top:449.23px;font-size:10.6px;letter-spacing:0.333px;color:#a3a7ab">00:00:10:00</span><div class="ln" style="left:597px;top:465px;width:1px;height:8px;background:#a0a4a8"></div><div class="ln" style="left:633px;top:469px;width:1px;height:4px;background:#80858a"></div><span class="t" style="left:669.40px;top:449.23px;font-size:10.6px;letter-spacing:0.411px;color:#a3a7ab">00:00:11:16</span><div class="ln" style="left:669px;top:465px;width:1px;height:8px;background:#a0a4a8"></div><div class="ln" style="left:705px;top:469px;width:1px;height:4px;background:#80858a"></div><span class="t" style="left:741.40px;top:449.23px;font-size:10.6px;letter-spacing:0.333px;color:#a3a7ab">00:00:13:08</span><div class="ln" style="left:741px;top:465px;width:1px;height:8px;background:#a0a4a8"></div><div class="ln" style="left:777px;top:469px;width:1px;height:4px;background:#80858a"></div><span class="t" style="left:813.40px;top:449.23px;font-size:10.6px;letter-spacing:0.333px;color:#a3a7ab">00:00:15:00</span><div class="ln" style="left:813px;top:465px;width:1px;height:8px;background:#a0a4a8"></div><div class="ln" style="left:849px;top:469px;width:1px;height:4px;background:#80858a"></div><span class="t" style="left:885.40px;top:449.23px;font-size:10.6px;letter-spacing:0.333px;color:#a3a7ab">00:00:16:16</span><div class="ln" style="left:885px;top:465px;width:1px;height:8px;background:#a0a4a8"></div><div class="ln" style="left:921px;top:469px;width:1px;height:4px;background:#80858a"></div><div class="ln" style="left:165px;top:474px;width:725px;height:1px;background:#3a3e43"></div><div class="a" style="left:165px;top:473px;width:135px;height:7px;background:#36718f;border-left:2px solid #a9c9d2;border-right:2px solid #a9c9d2"></div><div class="a" style="left:229px;top:473px;width:7px;height:7px;border:1.5px solid #b5d3da;background:#36718f"></div><div class="a" style="left:0px;top:480px;width:890px;height:250px;background:#1d1f22"></div><div class="a" style="left:0px;top:480px;width:164px;height:67px;background:#232629"></div><div class="a" style="left:166px;top:480px;width:724px;height:67px;background:#232629"></div><svg style="left:16.5px;top:489px" width="21" height="11" viewBox="0 0 21 11" fill="none" stroke="#fcfcfc" stroke-width="1.1" ><path d="M0.4,0.4L10.5,10.2L20.6,0.4"/></svg><div class="a" style="left:41px;top:481px;width:14px;height:26px;background:#43d284"></div><span class="t" style="left:41.70px;top:486.58px;font-size:11.3px;letter-spacing:-1.335px;color:#17453a">V2</span><svg style="left:82px;top:485px" width="18" height="18" viewBox="0 0 18 18"><path d="M14,1L17.5,4.5L5.5,16.5L2,13Z" fill="#8d9194"/><path d="M14,1L17.5,4.5L14,8L10.5,4.5Z" fill="#b4b7ba"/><path d="M12.6,4.5L14,3.1L15.4,4.5L14,5.9Z" fill="#7d8184"/><path d="M3,0.5V5.5M0.5,3H5.5" stroke="#9da1a4" stroke-width="1"/></svg><svg style="left:110px;top:485px" width="19" height="18" viewBox="0 0 19 18"><rect width="19" height="18" fill="#fcfcfc"/><rect x="5" y="2" width="9" height="6" fill="#232629"/><rect x="5" y="10" width="9" height="6" fill="#232629"/><g fill="#232629"><rect x="1.5" y="1.5" width="2" height="2.5"/><rect x="1.5" y="5.8" width="2" height="2.5"/><rect x="1.5" y="10" width="2" height="2.5"/><rect x="1.5" y="14" width="2" height="2.5"/><rect x="15.5" y="1.5" width="2" height="2.5"/><rect x="15.5" y="5.8" width="2" height="2.5"/><rect x="15.5" y="10" width="2" height="2.5"/><rect x="15.5" y="14" width="2" height="2.5"/></g></svg><svg style="left:139px;top:485px" width="16" height="19" viewBox="0 0 16 19" fill="none" stroke="#fcfcfc" stroke-width="1.4" ><rect x="0.7" y="9.7" width="14.6" height="8.3"/><path d="M4.2,9.5V5.5C4.2,0 13,0 13,5.5V6.5"/></svg><div class="a" style="left:0px;top:548px;width:164px;height:65px;background:#2e4858"></div><div class="a" style="left:166px;top:548px;width:724px;height:65px;background:#29414f"></div><svg style="left:16.5px;top:556px" width="21" height="11" viewBox="0 0 21 11" fill="none" stroke="#fcfcfc" stroke-width="1.1" ><path d="M0.4,0.4L10.5,10.2L20.6,0.4"/></svg><div class="a" style="left:41px;top:548px;width:14px;height:26px;background:#43d284"></div><span class="t" style="left:41.70px;top:553.58px;font-size:11.3px;letter-spacing:-1.335px;color:#17453a">V1</span><svg style="left:82px;top:552px" width="18" height="18" viewBox="0 0 18 18"><path d="M14,1L17.5,4.5L5.5,16.5L2,13Z" fill="#8d9194"/><path d="M14,1L17.5,4.5L14,8L10.5,4.5Z" fill="#b4b7ba"/><path d="M12.6,4.5L14,3.1L15.4,4.5L14,5.9Z" fill="#7d8184"/><path d="M3,0.5V5.5M0.5,3H5.5" stroke="#9da1a4" stroke-width="1"/></svg><svg style="left:110px;top:552px" width="19" height="18" viewBox="0 0 19 18"><rect width="19" height="18" fill="#fcfcfc"/><rect x="5" y="2" width="9" height="6" fill="#2e4858"/><rect x="5" y="10" width="9" height="6" fill="#2e4858"/><g fill="#2e4858"><rect x="1.5" y="1.5" width="2" height="2.5"/><rect x="1.5" y="5.8" width="2" height="2.5"/><rect x="1.5" y="10" width="2" height="2.5"/><rect x="1.5" y="14" width="2" height="2.5"/><rect x="15.5" y="1.5" width="2" height="2.5"/><rect x="15.5" y="5.8" width="2" height="2.5"/><rect x="15.5" y="10" width="2" height="2.5"/><rect x="15.5" y="14" width="2" height="2.5"/></g></svg><svg style="left:139px;top:552px" width="16" height="19" viewBox="0 0 16 19" fill="none" stroke="#fcfcfc" stroke-width="1.4" ><rect x="0.7" y="9.7" width="14.6" height="8.3"/><path d="M4.2,9.5V5.5C4.2,0 13,0 13,5.5V6.5"/></svg><div class="a" style="left:0px;top:614px;width:164px;height:66px;background:#24232a"></div><div class="a" style="left:166px;top:614px;width:724px;height:66px;background:#24232a"></div><svg style="left:16.5px;top:623px" width="21" height="11" viewBox="0 0 21 11" fill="none" stroke="#fcfcfc" stroke-width="1.1" ><path d="M0.4,0.4L10.5,10.2L20.6,0.4"/></svg><div class="a" style="left:41px;top:615px;width:14px;height:26px;background:#43d284"></div><span class="t" style="left:41.70px;top:620.58px;font-size:11.3px;letter-spacing:-1.335px;color:#17453a">A1</span><svg style="left:82px;top:619px" width="18" height="18" viewBox="0 0 18 18"><path d="M14,1L17.5,4.5L5.5,16.5L2,13Z" fill="#8d9194"/><path d="M14,1L17.5,4.5L14,8L10.5,4.5Z" fill="#b4b7ba"/><path d="M12.6,4.5L14,3.1L15.4,4.5L14,5.9Z" fill="#7d8184"/><path d="M3,0.5V5.5M0.5,3H5.5" stroke="#9da1a4" stroke-width="1"/></svg><svg style="left:110px;top:619px" width="19" height="18" viewBox="0 0 19 18" fill="none" stroke="#fcfcfc" stroke-width="1.3" ><path d="M0.5,6H4L9.5,0.8V17.2L4,12H0.5Z" fill="#fcfcfc" stroke="none"/><path d="M11.5,5.5C13,7.5 13,10.5 11.5,12.5M13.5,2.5C17,6 17,12 13.5,15.5"/></svg><svg style="left:139px;top:619px" width="16" height="19" viewBox="0 0 16 19" fill="none" stroke="#fcfcfc" stroke-width="1.4" ><rect x="0.7" y="9.7" width="14.6" height="8.3"/><path d="M4.2,9.5V5.5C4.2,0 13,0 13,5.5V6.5"/></svg><div class="a" style="left:0px;top:681px;width:164px;height:49px;background:#24232a"></div><div class="a" style="left:166px;top:681px;width:724px;height:49px;background:#24232a"></div><svg style="left:16.5px;top:690px" width="21" height="11" viewBox="0 0 21 11" fill="none" stroke="#fcfcfc" stroke-width="1.1" ><path d="M0.4,0.4L10.5,10.2L20.6,0.4"/></svg><div class="a" style="left:41px;top:682px;width:14px;height:26px;background:#43d284"></div><span class="t" style="left:41.70px;top:687.58px;font-size:11.3px;letter-spacing:-1.335px;color:#17453a">A2</span><svg style="left:82px;top:686px" width="18" height="18" viewBox="0 0 18 18"><path d="M14,1L17.5,4.5L5.5,16.5L2,13Z" fill="#8d9194"/><path d="M14,1L17.5,4.5L14,8L10.5,4.5Z" fill="#b4b7ba"/><path d="M12.6,4.5L14,3.1L15.4,4.5L14,5.9Z" fill="#7d8184"/><path d="M3,0.5V5.5M0.5,3H5.5" stroke="#9da1a4" stroke-width="1"/></svg><svg style="left:110px;top:686px" width="19" height="18" viewBox="0 0 19 18" fill="none" stroke="#fcfcfc" stroke-width="1.3" ><path d="M0.5,6H4L9.5,0.8V17.2L4,12H0.5Z" fill="#fcfcfc" stroke="none"/><path d="M11.5,5.5C13,7.5 13,10.5 11.5,12.5M13.5,2.5C17,6 17,12 13.5,15.5"/></svg><svg style="left:139px;top:686px" width="16" height="19" viewBox="0 0 16 19" fill="none" stroke="#fcfcfc" stroke-width="1.4" ><rect x="0.7" y="9.7" width="14.6" height="8.3"/><path d="M4.2,9.5V5.5C4.2,0 13,0 13,5.5V6.5"/></svg><div class="ln" style="left:164px;top:480px;width:2px;height:250px;background:#1c1f21"></div><div class="a" style="left:0px;top:730px;width:890px;height:13px;background:#2a2e32"></div><div class="a" style="left:165px;top:731px;width:21px;height:8px;border-radius:4px;background:#5b5f63"></div><svg style="left:878px;top:469.4px" width="13" height="10" viewBox="0 0 13 10"><path d="M0,0H13L6.5,9.6Z" fill="#fcfcfc"/></svg><div class="ln" style="left:884px;top:476px;width:1px;height:254px;background:#e8e8e8"></div></div><svg id="wm" style="left:300px;top:265px;opacity:0.43" width="290" height="215" viewBox="300 265 290 215">
<defs><linearGradient id="wg" x1="0" y1="0" x2="1" y2="0"><stop offset="0" stop-color="#3a62b8"/><stop offset="0.5" stop-color="#2a4aa8"/><stop offset="1" stop-color="#1c379d"/></linearGradient><clipPath id="wc"><circle cx="441" cy="366" r="75.4"/></clipPath>
<path id="arc" d="M354,421.5 Q441,400 528,421.5"/></defs>
<polygon points="441.7,274.0 445.7,280.8 450.5,274.5 453.9,281.7 459.3,275.8 462.0,283.3 467.9,278.0 469.9,285.7 476.3,281.0 477.5,288.9 484.3,284.9 484.8,292.8 492.0,289.4 491.6,297.4 499.1,294.7 498.0,302.6 505.7,300.6 503.9,308.4 511.7,307.2 509.2,314.7 517.1,314.3 513.8,321.5 521.7,321.9 517.7,328.8 525.6,329.9 521.0,336.3 528.7,338.2 523.5,344.2 531.0,346.8 525.2,352.2 532.4,355.6 526.1,360.4 533.0,364.4 526.3,368.7 532.7,373.3 525.6,376.9 531.6,382.1 524.2,385.0 529.6,390.8 521.9,392.9 526.8,399.2 519.0,400.6 523.2,407.4 515.2,408.0 518.8,415.1 510.8,415.0 513.7,422.4 505.8,421.5 507.9,429.1 500.1,427.5 501.5,435.3 493.9,432.9 494.5,440.8 487.2,437.7 487.1,445.6 480.1,441.8 479.2,449.7 472.6,445.2 470.9,453.0 464.8,447.9 462.4,455.5 456.8,449.8 453.6,457.1 448.6,451.0 444.8,457.9 440.4,451.3 435.9,457.9 432.2,450.8 427.0,456.9 424.0,449.6 418.3,455.2 416.0,447.6 409.8,452.6 408.3,444.8 401.6,449.1 400.8,441.2 393.8,445.0 393.7,437.0 386.4,440.0 387.1,432.1 379.5,434.4 381.0,426.6 373.2,428.2 375.4,420.5 367.5,421.3 370.5,413.9 362.5,414.0 366.2,406.9 358.2,406.2 362.6,399.5 354.7,398.0 359.7,391.8 352.1,389.5 357.6,383.8 350.2,380.8 356.2,375.7 349.2,372.0 355.7,367.4 349.0,363.1 356.0,359.2 349.8,354.2 357.0,351.0 351.3,345.5 358.9,343.0 353.7,336.9 361.5,335.2 356.9,328.6 364.8,327.6 360.9,320.7 368.9,320.5 365.7,313.2 373.6,313.7 371.1,306.2 379.0,307.5 377.2,299.7 384.9,301.7 383.9,293.9 391.4,296.6 391.1,288.7 398.3,292.2 398.8,284.2 405.6,288.4 406.9,280.5 413.3,285.3 415.3,277.7 421.2,283.0 424.0,275.6 429.3,281.5 432.8,274.4 437.5,280.8" fill="#d6d6d6"/>
<circle cx="441" cy="366" r="78.2" fill="none" stroke="#3a78e0" stroke-width="2.2"/>
<circle cx="441" cy="366" r="75.4" fill="url(#wg)"/>
<rect x="432" y="280" width="120" height="32" fill="#5458ac" clip-path="url(#wc)"/>
<path d="M415,286H432V312H415Z" fill="#1a6a9a" clip-path="url(#wc)"/>
<path d="M362,373L504,320L520,335L391,400L370,400Z" fill="#2e749d" clip-path="url(#wc)"/>
<text transform="translate(0,337) scale(1,1.28) translate(0,-337)" x="440.5" y="337" text-anchor="middle" font-family="'DejaVu Sans',sans-serif" font-weight="bold" font-size="30" fill="#c2c4c6" stroke="#c2c4c6" stroke-width="0.9" direction="rtl" textLength="90" lengthAdjust="spacingAndGlyphs">منتديات</text>
<text transform="translate(0,372) scale(1,1.18) translate(0,-372)" x="443" y="372" text-anchor="middle" font-family="'DejaVu Sans',sans-serif" font-weight="bold" font-size="29" fill="#c2c4c6" stroke="#c2c4c6" stroke-width="0.9" direction="rtl" textLength="101" lengthAdjust="spacingAndGlyphs">هرقلة ستار</text>
<polygon points="312.5,429 352,418 384,410 384,428 396,442 366.6,448 320.6,464.3 328.2,439.5" fill="#1c4abe"/>
<polygon points="571,429 531,418 499,410 499,428 487,442 516.4,448 562.4,464.3 554.8,439.5" fill="#1c4abe"/>
<path d="M351,401 Q441,377 532,401 L532,434 Q441,411 351,434Z" fill="#225cba"/>
<path d="M351,401 Q353.5,400.3 356,399.7 L356,432.7 Q353.5,433.3 351,434Z" fill="#3a86cc"/>
<path d="M532,401 Q529.5,400.3 527,399.7 L527,432.7 Q529.5,433.3 532,434Z" fill="#3a86cc"/>
<text font-family="'Liberation Sans',sans-serif" font-weight="bold" font-style="italic" font-size="25" fill="#b6b8ba" stroke="#b6b8ba" stroke-width="1"><textPath href="#arc" textLength="166" lengthAdjust="spacingAndGlyphs" startOffset="2">HERGLA STAR FORUMS</textPath></text>
</svg>
</body></html>
